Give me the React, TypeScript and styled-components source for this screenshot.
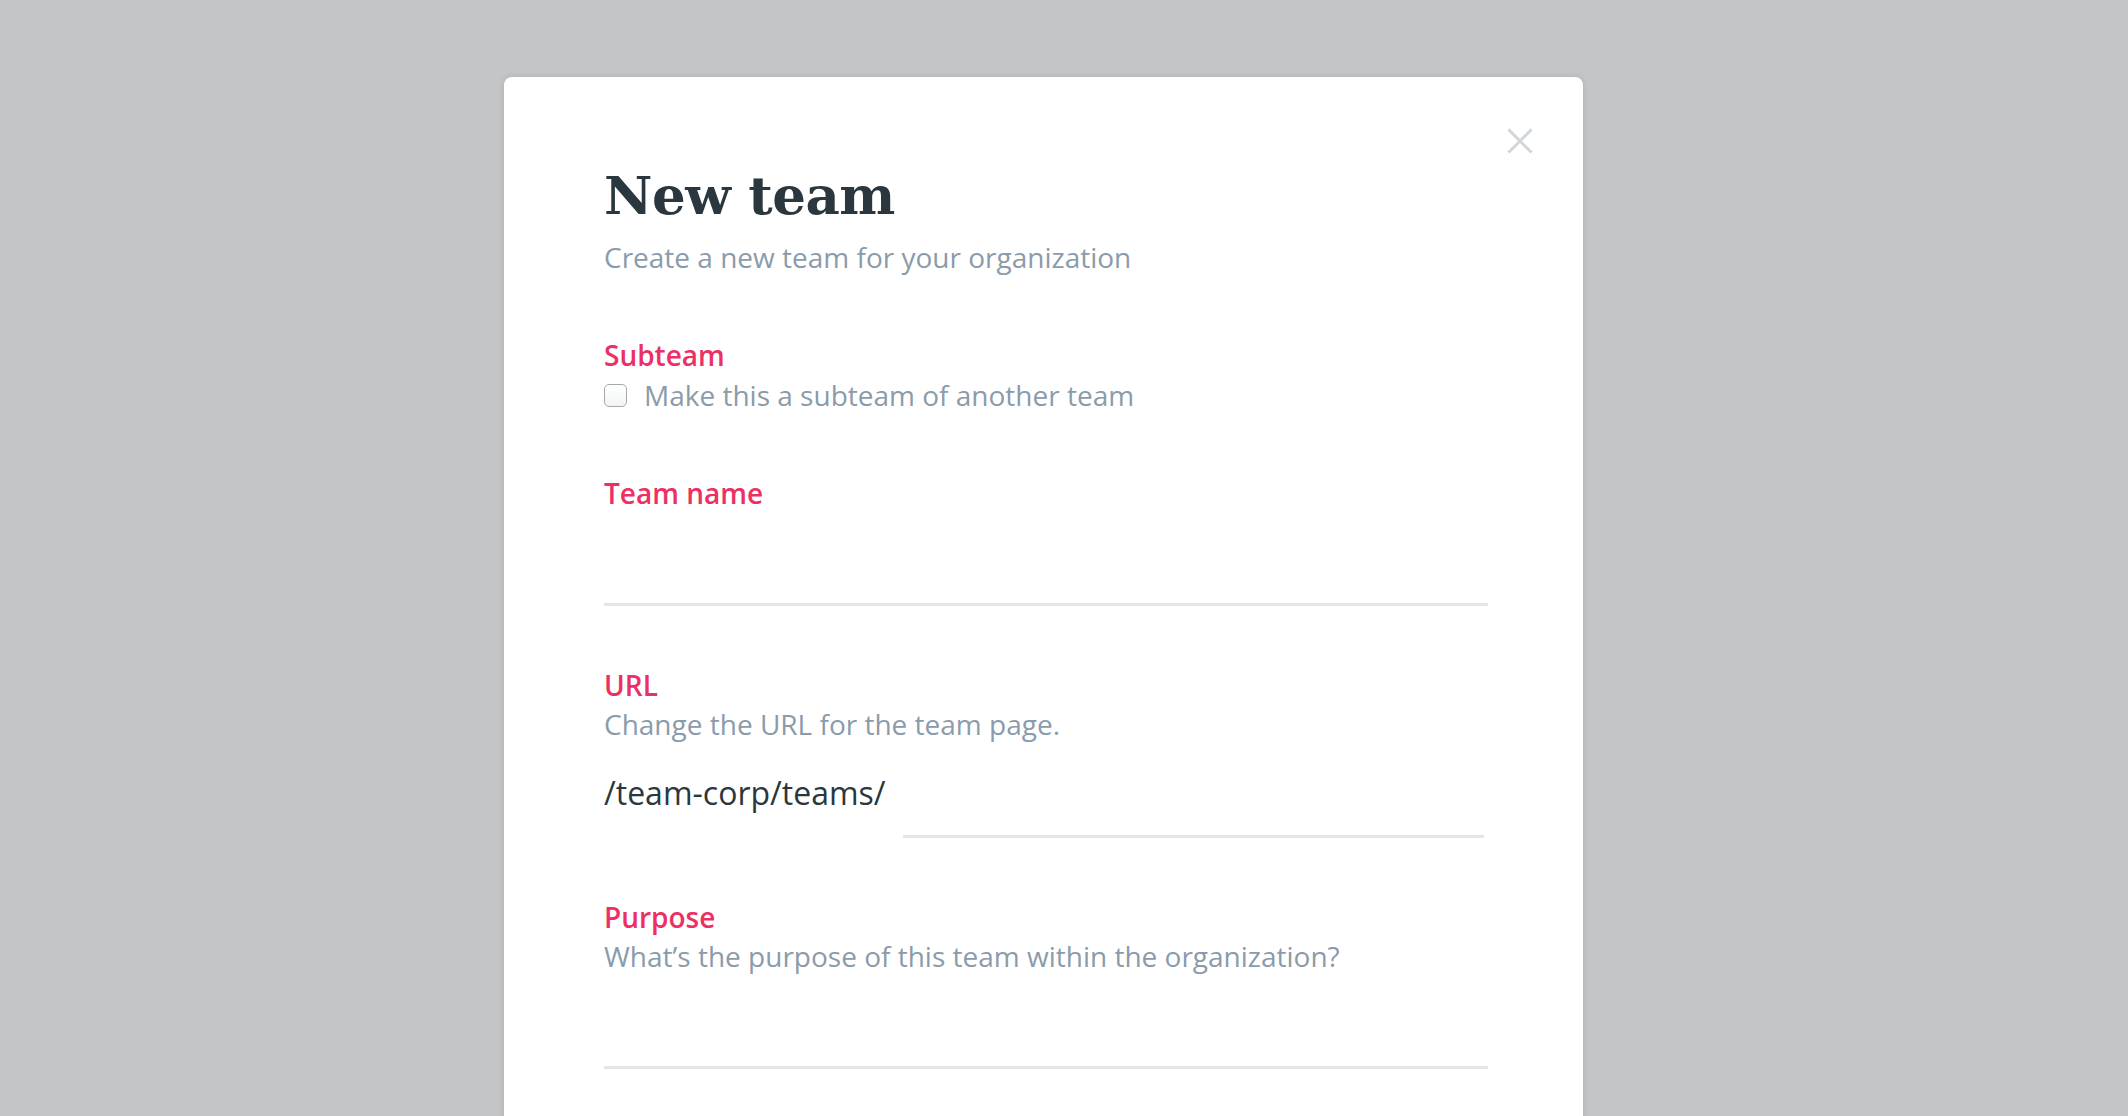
import styled, { createGlobalStyle } from "styled-components";

const GlobalStyle = createGlobalStyle`
  html, body {
    margin: 0;
    padding: 0;
    background: #c4c5c7;
    overflow: hidden;
  }
  body {
    font-family: "Open Sans", "Noto Sans", sans-serif;
  }
`;

const Page = styled.div`
  height: 1116px;
  padding: 77px 0 0 504px;
  box-sizing: border-box;
  overflow: hidden;
`;

const Modal = styled.div`
  position: relative;
  width: 1079px;
  min-height: 1200px;
  box-sizing: border-box;
  padding: 86px 95px 0 100px;
  background: #ffffff;
  border-radius: 8px;
  box-shadow: 0 0 6px rgba(0, 0, 0, 0.12);
  display: flex;
  flex-direction: column;
`;

const CloseButton = styled.button`
  position: absolute;
  top: 51px;
  right: 50px;
  width: 26px;
  height: 26px;
  padding: 0;
  border: none;
  background: none;
  cursor: pointer;
  display: flex;
`;

const Title = styled.h1`
  margin: 0;
  font-family: "DejaVu Serif", "Liberation Serif", serif;
  font-weight: 700;
  font-size: 53px;
  line-height: 64px;
  letter-spacing: -0.5px;
  color: #2b373e;
`;

const Text = styled.p<{ $tone?: "muted" | "dark" }>`
  margin: 0;
  font-size: 28px;
  line-height: 39px;
  color: ${({ $tone }) => ($tone === "dark" ? "#2b373e" : "#8a9bab")};
`;

const Subtitle = styled(Text)`
  margin-top: 11px;
`;

const Section = styled.div<{ $gap: number }>`
  display: flex;
  flex-direction: column;
  margin-top: ${({ $gap }) => $gap}px;
`;

const Label = styled.label`
  font-size: 28px;
  line-height: 39px;
  font-weight: 600;
  color: #ec3064;
`;

const CheckRow = styled.div`
  display: flex;
  align-items: center;
  gap: 17px;
  margin-top: 1px;
`;

const CheckBox = styled.span`
  width: 23px;
  height: 23px;
  box-sizing: border-box;
  border: 1px solid #a3a9ad;
  border-radius: 5px;
  background: linear-gradient(#ffffff, #f3f4f5);
`;

const Field = styled.div<{ $height: number }>`
  height: ${({ $height }) => $height}px;
  border-bottom: 3px solid #e3e6e8;
`;

const UrlRow = styled.div`
  display: flex;
  align-items: flex-start;
  gap: 17px;
  margin-top: 27px;
`;

const UrlPrefix = styled.span`
  font-size: 32px;
  line-height: 44px;
  color: #2b373e;
  white-space: nowrap;
`;

const UrlInput = styled.div`
  flex: 1;
  height: 64px;
  margin-right: 4px;
  border-bottom: 3px solid #e3e6e8;
`;

const CloseIcon = () => (
  <svg width="26" height="26" viewBox="0 0 26 26">
    <path
      d="M1.5 1.5 L24.5 24.5 M24.5 1.5 L1.5 24.5"
      stroke="#d0d6da"
      strokeWidth="3"
      strokeLinecap="butt"
    />
  </svg>
);

export default function App() {
  return (
    <>
      <GlobalStyle />
      <Page>
        <Modal>
          <CloseButton aria-label="Close">
            <CloseIcon />
          </CloseButton>
          <Title>New team</Title>
          <Subtitle>Create a new team for your organization</Subtitle>

          <Section $gap={59}>
            <Label>Subteam</Label>
            <CheckRow>
              <CheckBox />
              <Text>Make this a subteam of another team</Text>
            </CheckRow>
          </Section>

          <Section $gap={59}>
            <Label>Team name</Label>
            <Field $height={90} />
          </Section>

          <Section $gap={60}>
            <Label>URL</Label>
            <Text>Change the URL for the team page.</Text>
            <UrlRow>
              <UrlPrefix>/team-corp/teams/</UrlPrefix>
              <UrlInput />
            </UrlRow>
          </Section>

          <Section $gap={60}>
            <Label>Purpose</Label>
            <Text>What’s the purpose of this team within the organization?</Text>
            <Field $height={90} />
          </Section>
        </Modal>
      </Page>
    </>
  );
}
